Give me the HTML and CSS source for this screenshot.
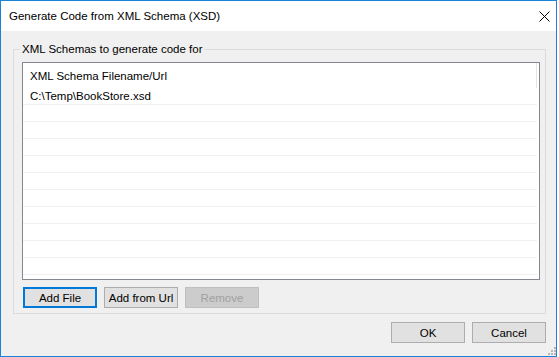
FILE: index.html
```html
<!DOCTYPE html>
<html>
<head>
<meta charset="utf-8">
<link rel="stylesheet" href="styles.css">
</head>
<body>
<div class="window">
  <div class="titlebar">
    <span class="title">Generate Code from XML Schema (XSD)</span>
    <svg class="close" width="11" height="11" viewBox="0 0 11 11"><path d="M0.5 0.5 L10.5 10.5 M10.5 0.5 L0.5 10.5" stroke="#000" stroke-width="1" fill="none"/></svg>
  </div>
  <div class="content">
    <fieldset class="group">
      <legend>XML Schemas to generate code for</legend>
      <div class="list">
        <div class="list-header">XML Schema Filename/Url</div>
        <div class="row">C:\Temp\BookStore.xsd</div>
        <div class="row"></div>
        <div class="row"></div>
        <div class="row"></div>
        <div class="row"></div>
        <div class="row"></div>
        <div class="row"></div>
        <div class="row"></div>
        <div class="row"></div>
        <div class="row"></div>
        <div class="row"></div>
      </div>
      <div class="buttons">
        <button class="btn default">Add File</button>
        <button class="btn">Add from Url</button>
        <button class="btn disabled">Remove</button>
      </div>
    </fieldset>
    <div class="footer">
      <button class="btn">OK</button>
      <button class="btn">Cancel</button>
    </div>
  </div>
  <svg class="grip" width="9" height="9" viewBox="0 0 9 9">
    <rect x="7" y="1" width="2" height="2" fill="#b8b8b8"/>
    <rect x="4" y="4" width="2" height="2" fill="#b8b8b8"/>
    <rect x="7" y="4" width="2" height="2" fill="#b8b8b8"/>
    <rect x="1" y="7" width="2" height="2" fill="#b8b8b8"/>
    <rect x="4" y="7" width="2" height="2" fill="#b8b8b8"/>
    <rect x="7" y="7" width="2" height="2" fill="#b8b8b8"/>
  </svg>
</div>
</body>
</html>
```
FILE: styles.css
```css
body {
  margin: 0;
  background: #fff;
  font-family: "Liberation Sans", Arial, sans-serif;
  font-size: 11.5px;
  color: #000;
}

.window {
  position: relative;
  width: 557px;
  height: 357px;
  box-sizing: border-box;
  border: 1px solid #1883d7;
  background: #f0f0f0;
  display: flex;
  flex-direction: column;
}

.titlebar {
  height: 30px;
  flex: none;
  background: #fff;
  display: flex;
  align-items: center;
  justify-content: space-between;
  padding: 0 6px 0 8px;
}

.close {
  display: block;
}

.content {
  flex: 1;
  display: flex;
  flex-direction: column;
  padding: 11px 10px 0 12px;
}

.group {
  margin: 0;
  padding: 5px 5px 5px 8px;
  border: 1px solid #dcdcdc;
  min-width: 0;
}

.group legend {
  padding: 0 2px;
  margin-left: -2px;
  line-height: 15px;
}

.list {
  height: 218px;
  box-sizing: border-box;
  border: 1px solid #828790;
  background: #fff;
  padding-right: 2px;
  display: flex;
  flex-direction: column;
}

.list-header {
  height: 25px;
  flex: none;
  box-sizing: border-box;
  display: flex;
  align-items: center;
  padding-left: 7px;
  border-right: 1px solid #e5e5e5;
}

.row {
  height: 17px;
  flex: none;
  box-sizing: border-box;
  border-bottom: 1px solid #f0f0f0;
  padding-left: 7px;
  line-height: 16px;
}

.buttons {
  display: flex;
  gap: 7px;
  margin-top: 7px;
  padding-left: 1px;
}

.btn {
  width: 74px;
  height: 21px;
  box-sizing: border-box;
  border: 1px solid #adadad;
  background: #e1e1e1;
  font: inherit;
  color: #000;
  padding: 0;
  margin: 0;
}

.btn.default {
  border: 2px solid #0078d7;
}

.btn.disabled {
  background: #cccccc;
  border-color: #bfbfbf;
  color: #a0a0a0;
}

.footer {
  display: flex;
  justify-content: flex-end;
  gap: 7px;
  margin-top: 8px;
}

.grip {
  position: absolute;
  right: 0;
  bottom: 1px;
}
```
